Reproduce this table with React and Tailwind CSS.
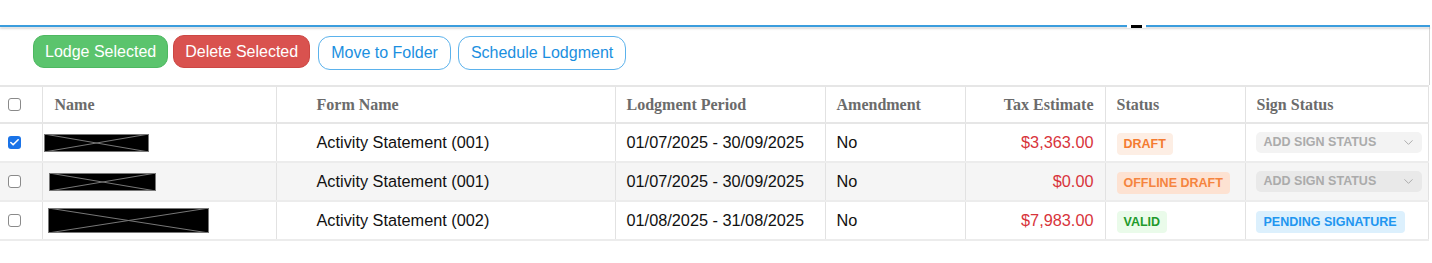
import { ChevronDown, Check } from 'lucide-react'

const rows = [
  { id: 1, checked: true, redact: { w: 105, h: 18, ml: 1 }, form: 'Activity Statement (001)', period: '01/07/2025 - 30/09/2025', amend: 'No', tax: '$3,363.00', status: 'DRAFT', sign: null },
  { id: 2, checked: false, redact: { w: 107, h: 18, ml: 6 }, form: 'Activity Statement (001)', period: '01/07/2025 - 30/09/2025', amend: 'No', tax: '$0.00', status: 'OFFLINE DRAFT', sign: null, alt: true },
  { id: 3, checked: false, redact: { w: 161, h: 25, ml: 5 }, form: 'Activity Statement (002)', period: '01/08/2025 - 31/08/2025', amend: 'No', tax: '$7,983.00', status: 'VALID', sign: 'PENDING SIGNATURE' },
]

function Redacted({ w, h, ml }) {
  return (
    <svg width={w} height={h} style={{ marginLeft: ml }} className="block">
      <rect x="0.5" y="0.5" width={w - 1} height={h - 1} fill="#000" stroke="#777" />
      <line x1="0" y1="0" x2={w} y2={h} stroke="#777" strokeWidth="1" />
      <line x1="0" y1={h} x2={w} y2="0" stroke="#777" strokeWidth="1" />
    </svg>
  )
}

function Box({ checked }) {
  if (checked) {
    return (
      <div className="w-[13px] h-[13px] rounded-[3px] bg-[#1a73e8] flex items-center justify-center">
        <Check size={11} strokeWidth={3.5} color="#fff" />
      </div>
    )
  }
  return <div className="w-[13px] h-[13px] rounded-[3px] border border-[#8a8a8a] bg-white" />
}

function StatusBadge({ status }) {
  const cls =
    status === 'DRAFT' ? 'bg-[#fdeee4] text-[#f47b30]' :
    status === 'OFFLINE DRAFT' ? 'bg-[#fde2d2] text-[#f5843e]' :
    'bg-[#eafbea] text-[#1f9a2c]'
  return <span className={`inline-block px-[7px] py-[2px] rounded-[4px] text-[12.5px] font-bold ${cls}`}>{status}</span>
}

export default function App() {
  const head = "text-left text-[16px] font-bold text-[#6b6b6b] font-['Liberation_Serif',serif] border-r border-[#e2e2e2]"
  const cell = "border-r border-[#e2e2e2] text-[16.3px] text-[#111]"
  return (
    <div className="w-[1432px] h-[263px] bg-white font-['Liberation_Sans',Arial,sans-serif] overflow-hidden">
      <div className="h-[25px]" />
      <div className="relative w-[1430px] h-[2px] bg-[#3b9ddd] shadow-[0_2px_2px_rgba(0,0,0,0.15)]">
        <div className="absolute left-[1127px] top-0 w-[19px] h-[3px] bg-white" />
        <div className="absolute left-[1131px] top-0 w-[11px] h-[3px] bg-black" />
      </div>
      <div className="flex items-start gap-[5px] pl-[33px] pt-[8px] h-[58px] border-r border-[#d6d6d6] w-[1430px]">
        <button className="h-[33px] px-[11px] rounded-[11px] bg-[#5bc46d] text-white text-[16px] border border-[#4eb861]">Lodge Selected</button>
        <button className="h-[33px] px-[11px] rounded-[11px] bg-[#d9524f] text-white text-[16px] border border-[#cc4744]">Delete Selected</button>
        <button className="ml-[3px] mt-[1px] h-[34px] px-[12px] rounded-[12px] bg-white text-[#1b8fe0] text-[16px] border border-[#5bb2ec]">Move to Folder</button>
        <button className="ml-[2px] mt-[1px] h-[34px] px-[12px] rounded-[12px] bg-white text-[#1b8fe0] text-[16px] border border-[#5bb2ec]">Schedule Lodgment</button>
      </div>
      <table className="w-[1428px] border-collapse table-fixed">
        <colgroup>
          <col className="w-[42px]" />
          <col className="w-[234px]" />
          <col className="w-[339px]" />
          <col className="w-[210px]" />
          <col className="w-[140px]" />
          <col className="w-[140px]" />
          <col className="w-[140px]" />
          <col className="w-[183px]" />
        </colgroup>
        <thead>
          <tr className="h-[37px] border-t-2 border-b-2 border-[#e6e6e6]">
            <th className="border-r border-[#e2e2e2] pl-[8px]"><Box checked={false} /></th>
            <th className={`${head} pl-[12px]`}>Name</th>
            <th className={`${head} pl-[40px]`}>Form Name</th>
            <th className={`${head} pl-[11px]`}>Lodgment Period</th>
            <th className={`${head} pl-[11px]`}>Amendment</th>
            <th className={`${head} pr-[11px] text-right`}>Tax Estimate</th>
            <th className={`${head} pl-[11px]`}>Status</th>
            <th className={`${head} pl-[11px]`}>Sign Status</th>
          </tr>
        </thead>
        <tbody>
          {rows.map(r => (
            <tr key={r.id} className={`h-[39px] border-b-2 border-[#ececec] ${r.alt ? 'bg-[#f5f5f5]' : 'bg-white'}`}>
              <td className="border-r border-[#e2e2e2] pl-[8px]"><Box checked={r.checked} /></td>
              <td className="border-r border-[#e2e2e2]"><Redacted {...r.redact} /></td>
              <td className={`${cell} pl-[40px]`}>{r.form}</td>
              <td className={`${cell} pl-[11px]`}>{r.period}</td>
              <td className={`${cell} pl-[11px]`}>{r.amend}</td>
              <td className={`${cell} pr-[11px] text-right text-[#d8343b]`}>{r.tax}</td>
              <td className={`${cell} pl-[11px]`}><StatusBadge status={r.status} /></td>
              <td className={`${cell} pl-[10px] pr-[6px]`}>
                {r.sign ? (
                  <span className="inline-block px-[8px] py-[2px] rounded-[4px] bg-[#dcf0fd] text-[#2196f0] text-[12.5px] font-bold">{r.sign}</span>
                ) : (
                  <div className={`flex items-center justify-between h-[21px] pl-[8px] pr-[6px] rounded-[5px] text-[12.5px] font-bold text-[#ababab] ${r.alt ? 'bg-[#e9e9e9]' : 'bg-[#f3f3f3]'}`}>
                    <span>ADD SIGN STATUS</span>
                    <ChevronDown size={15} strokeWidth={1.5} color="#a8a8a8" />
                  </div>
                )}
              </td>
            </tr>
          ))}
        </tbody>
      </table>
    </div>
  )
}
